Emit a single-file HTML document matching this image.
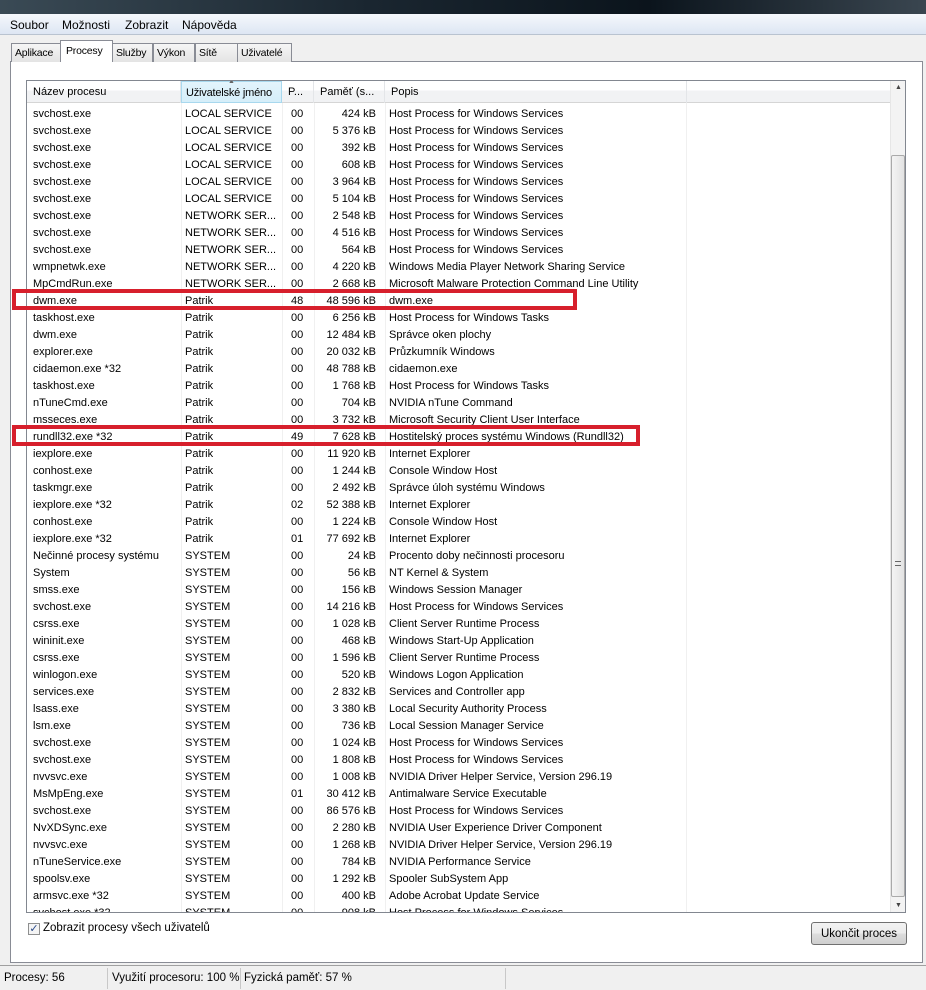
<!DOCTYPE html>
<html><head><meta charset="utf-8"><style>
*{margin:0;padding:0;box-sizing:border-box}
body{width:926px;height:990px;overflow:hidden;background:#f0f0f0;font-family:"Liberation Sans",sans-serif;font-size:11px;color:#000;position:relative}
.abs{position:absolute}
#title{left:0;top:0;width:926px;height:14px;background:linear-gradient(90deg,#3a4a55,#1a2630 40%,#0b141c 70%,#3a4650);}
#menu{left:0;top:14px;width:926px;height:21px;background:linear-gradient(#f5f8fc,#dde6f3);border-bottom:1px solid #b9c3d0;font-size:12px}
#menu span{position:absolute;top:4px}
.tab{position:absolute;top:43px;height:19px;background:linear-gradient(#f6f6f6,#e4e4e4);border:1px solid #898c95;border-bottom:none;padding:3px 3px;font-size:10.5px;letter-spacing:-0.2px;white-space:nowrap;overflow:hidden}
#panel{left:10px;top:61px;width:913px;height:902px;background:#fff;border:1px solid #898c95}
#list{left:26px;top:80px;width:880px;height:833px;border:1px solid #828790;background:#fff;overflow:hidden}
#hdr{position:absolute;left:0;top:0;width:863px;height:22px;background:linear-gradient(#fff,#fff 45%,#f1f2f4 46%,#f1f2f4);border-bottom:1px solid #d5d5d5}
.hc{position:absolute;top:0;height:22px;border-right:1px solid #e3e5e8;padding:5px 0 0 6px;white-space:nowrap}
.row{position:absolute;left:0;height:17px;width:862px}
.row span{position:absolute;top:3px;white-space:nowrap}
.c1{left:6px}.c2{left:158px}.c3{left:264px}.c4{right:513px}.c5{left:362px}
.vl{position:absolute;top:22px;bottom:0;width:1px;background:#f0f0f0}
#sb{position:absolute;left:863px;top:0;width:16px;height:831px;background:#f3f3f3;border-left:1px solid #e6e6e6}
#thumb{position:absolute;left:864px;top:74px;width:14px;height:742px;background:linear-gradient(90deg,#f4f4f4,#e3e3e3);border:1px solid #aaa;border-radius:2px}
.red{position:absolute;border:4px solid #d71f2c}
#status{left:0;top:965px;width:926px;height:25px;background:#f0f0f0;border-top:1px solid #a0a0a0;font-size:11.5px}
#status span{position:absolute;top:6px}
.sep{position:absolute;top:2px;width:1px;height:21px;background:#c8c8c8}
#btn{left:811px;top:922px;width:96px;height:23px;border:1px solid #707070;border-radius:3px;background:linear-gradient(#f2f2f2,#ebebeb 50%,#dddddd 51%,#cfcfcf);text-align:center;padding-top:5px;font-size:11.5px}
#cb{left:28px;top:923px;width:12px;height:12px;border:1px solid #8e8f8f;background:#f4f4f4;font-size:11px;line-height:10px;text-align:center;color:#2a4a8a}
</style></head><body>
<div id="title" class="abs"></div>
<div id="menu" class="abs"><span style="left:10px">Soubor</span><span style="left:62px">Možnosti</span><span style="left:125px">Zobrazit</span><span style="left:182px">Nápověda</span></div>
<div id="panel" class="abs"></div>
<div class="tab" style="left:11px;width:50px">Aplikace</div>
<div class="tab" style="left:60px;top:40px;height:22px;width:53px;background:#fff;padding:4px 5px">Procesy</div>
<div class="tab" style="left:112px;width:41px">Služby</div>
<div class="tab" style="left:153px;width:42px">Výkon</div>
<div class="tab" style="left:195px;width:43px">Sítě</div>
<div class="tab" style="left:237px;width:55px">Uživatelé</div>
<div id="list" class="abs">
<div id="hdr">
<div class="hc" style="left:0;width:154px">Název procesu</div>
<div class="hc" style="left:154px;width:101px;background:linear-gradient(#e3f4fc,#d5eef9);border:1px solid #a8d8ee;padding-left:4px;letter-spacing:-0.2px">Uživatelské jméno<span style="position:absolute;left:46px;top:-4px;font-size:7px;color:#666">▲</span></div>
<div class="hc" style="left:255px;width:32px">P...</div>
<div class="hc" style="left:287px;width:71px">Paměť (s...</div>
<div class="hc" style="left:358px;width:302px">Popis</div>
</div>
<div class="vl" style="left:154px"></div><div class="vl" style="left:255px"></div><div class="vl" style="left:287px"></div><div class="vl" style="left:358px"></div><div class="vl" style="left:659px"></div>
<div id="rows"></div>
<div id="sb"><div style="position:absolute;left:4px;top:3px;font-size:7px;color:#444">▲</div><div style="position:absolute;left:4px;bottom:3px;font-size:7px;color:#444">▼</div></div>
<div id="thumb"><div style="position:absolute;left:3px;top:405px;width:6px;height:5px;border-top:1px solid #666;border-bottom:1px solid #666"></div></div>
</div>
<div class="red" style="left:12px;top:289px;width:565px;height:21px"></div>
<div class="red" style="left:12px;top:425px;width:628px;height:21px"></div>
<div id="cb" class="abs">✓</div>
<div class="abs" style="left:43px;top:922px;font-size:11.5px">Zobrazit procesy všech uživatelů</div>
<div id="btn" class="abs">Ukončit proces</div>
<div id="status" class="abs"><span style="left:4px">Procesy: 56</span><div class="sep" style="left:107px"></div><span style="left:112px">Využití procesoru: 100 %</span><div class="sep" style="left:240px"></div><span style="left:244px">Fyzická paměť: 57 %</span><div class="sep" style="left:505px"></div></div>
<script>
var d=[
["svchost.exe","LOCAL SERVICE","00","424 kB","Host Process for Windows Services"],
["svchost.exe","LOCAL SERVICE","00","5 376 kB","Host Process for Windows Services"],
["svchost.exe","LOCAL SERVICE","00","392 kB","Host Process for Windows Services"],
["svchost.exe","LOCAL SERVICE","00","608 kB","Host Process for Windows Services"],
["svchost.exe","LOCAL SERVICE","00","3 964 kB","Host Process for Windows Services"],
["svchost.exe","LOCAL SERVICE","00","5 104 kB","Host Process for Windows Services"],
["svchost.exe","NETWORK SER...","00","2 548 kB","Host Process for Windows Services"],
["svchost.exe","NETWORK SER...","00","4 516 kB","Host Process for Windows Services"],
["svchost.exe","NETWORK SER...","00","564 kB","Host Process for Windows Services"],
["wmpnetwk.exe","NETWORK SER...","00","4 220 kB","Windows Media Player Network Sharing Service"],
["MpCmdRun.exe","NETWORK SER...","00","2 668 kB","Microsoft Malware Protection Command Line Utility"],
["dwm.exe","Patrik","48","48 596 kB","dwm.exe"],
["taskhost.exe","Patrik","00","6 256 kB","Host Process for Windows Tasks"],
["dwm.exe","Patrik","00","12 484 kB","Správce oken plochy"],
["explorer.exe","Patrik","00","20 032 kB","Průzkumník Windows"],
["cidaemon.exe *32","Patrik","00","48 788 kB","cidaemon.exe"],
["taskhost.exe","Patrik","00","1 768 kB","Host Process for Windows Tasks"],
["nTuneCmd.exe","Patrik","00","704 kB","NVIDIA nTune Command"],
["msseces.exe","Patrik","00","3 732 kB","Microsoft Security Client User Interface"],
["rundll32.exe *32","Patrik","49","7 628 kB","Hostitelský proces systému Windows (Rundll32)"],
["iexplore.exe","Patrik","00","11 920 kB","Internet Explorer"],
["conhost.exe","Patrik","00","1 244 kB","Console Window Host"],
["taskmgr.exe","Patrik","00","2 492 kB","Správce úloh systému Windows"],
["iexplore.exe *32","Patrik","02","52 388 kB","Internet Explorer"],
["conhost.exe","Patrik","00","1 224 kB","Console Window Host"],
["iexplore.exe *32","Patrik","01","77 692 kB","Internet Explorer"],
["Nečinné procesy systému","SYSTEM","00","24 kB","Procento doby nečinnosti procesoru"],
["System","SYSTEM","00","56 kB","NT Kernel & System"],
["smss.exe","SYSTEM","00","156 kB","Windows Session Manager"],
["svchost.exe","SYSTEM","00","14 216 kB","Host Process for Windows Services"],
["csrss.exe","SYSTEM","00","1 028 kB","Client Server Runtime Process"],
["wininit.exe","SYSTEM","00","468 kB","Windows Start-Up Application"],
["csrss.exe","SYSTEM","00","1 596 kB","Client Server Runtime Process"],
["winlogon.exe","SYSTEM","00","520 kB","Windows Logon Application"],
["services.exe","SYSTEM","00","2 832 kB","Services and Controller app"],
["lsass.exe","SYSTEM","00","3 380 kB","Local Security Authority Process"],
["lsm.exe","SYSTEM","00","736 kB","Local Session Manager Service"],
["svchost.exe","SYSTEM","00","1 024 kB","Host Process for Windows Services"],
["svchost.exe","SYSTEM","00","1 808 kB","Host Process for Windows Services"],
["nvvsvc.exe","SYSTEM","00","1 008 kB","NVIDIA Driver Helper Service, Version 296.19"],
["MsMpEng.exe","SYSTEM","01","30 412 kB","Antimalware Service Executable"],
["svchost.exe","SYSTEM","00","86 576 kB","Host Process for Windows Services"],
["NvXDSync.exe","SYSTEM","00","2 280 kB","NVIDIA User Experience Driver Component"],
["nvvsvc.exe","SYSTEM","00","1 268 kB","NVIDIA Driver Helper Service, Version 296.19"],
["nTuneService.exe","SYSTEM","00","784 kB","NVIDIA Performance Service"],
["spoolsv.exe","SYSTEM","00","1 292 kB","Spooler SubSystem App"],
["armsvc.exe *32","SYSTEM","00","400 kB","Adobe Acrobat Update Service"],
["svchost.exe *32","SYSTEM","00","908 kB","Host Process for Windows Services"]];
var h="";d.forEach(function(r,i){h+='<div class="row" style="top:'+(24+17*i)+'px"><span class="c1">'+r[0]+'</span><span class="c2">'+r[1]+'</span><span class="c3">'+r[2]+'</span><span class="c4">'+r[3]+'</span><span class="c5">'+r[4].replace("&","&amp;")+'</span></div>'});
document.getElementById("rows").innerHTML=h;
</script>
</body></html>
